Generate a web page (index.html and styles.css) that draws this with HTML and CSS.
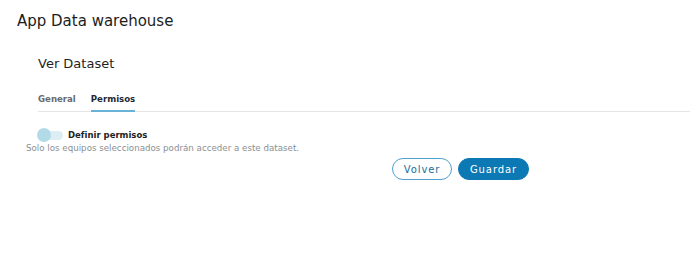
FILE: index.html
```html
<!DOCTYPE html>
<html lang="es">
<head>
<meta charset="utf-8">
<link rel="stylesheet" href="styles.css">
</head>
<body>
<header class="app-header">
  <h1 class="app-title">App Data warehouse</h1>
</header>
<main class="page">
  <h2 class="page-title">Ver Dataset</h2>
  <nav class="tabs">
    <span class="tab">General</span>
    <span class="tab tab-active">Permisos</span>
  </nav>
  <section class="perm">
    <div class="toggle-row">
      <span class="toggle"><span class="knob"></span></span>
      <span class="toggle-label">Definir permisos</span>
    </div>
    <p class="perm-desc">Solo los equipos seleccionados podrán acceder a este dataset.</p>
    <div class="actions">
      <button class="btn btn-outline">Volver</button>
      <button class="btn btn-primary">Guardar</button>
    </div>
  </section>
</main>
</body>
</html>
```

FILE: styles.css
```css
* { box-sizing: border-box; }
html, body { margin: 0; padding: 0; background: #fff; }
body {
  font-family: "DejaVu Sans", "Open Sans", sans-serif;
  color: #222;
  width: 690px;
  height: 271px;
  overflow: hidden;
}
.app-header { padding: 11px 0 0 17px; }
.app-title {
  margin: 0;
  font-size: 15px;
  font-weight: 400;
  line-height: 20px;
  color: #1d1d1d;
}
.page { padding: 25px 0 0 38px; }
.page-title {
  margin: 0;
  font-size: 13px;
  font-weight: 400;
  line-height: 16px;
  color: #1f1f1f;
}
.tabs {
  margin-top: 19px;
  display: flex;
  gap: 15px;
  border-bottom: 1px solid #e6e6e6;
}
.tab {
  font-size: 8.6px;
  line-height: 11px;
  padding: 3px 0 5px;
  color: #666b70;
  font-weight: 600;
  border-bottom: 2px solid transparent;
  margin-bottom: -1px;
}
.tab-active {
  color: #1e2a35;
  font-weight: 700;
  border-bottom-color: #6ab3d6;
}
.perm { padding-top: 18px; }
.toggle-row { display: flex; align-items: center; gap: 5px; }
.toggle {
  display: inline-flex;
  align-items: center;
  width: 25px;
  height: 9px;
  border-radius: 5px;
  background: #dcedf3;
  position: relative;
}
.knob {
  width: 14px;
  height: 14px;
  border-radius: 50%;
  background: #b3dbe7;
  margin-left: -1px;
}
.toggle-label {
  font-size: 8.5px;
  font-weight: 700;
  color: #222;
}
.perm-desc {
  margin: 3px 0 0 -12px;
  font-size: 8.7px;
  line-height: 11px;
  color: #8a8f93;
}
.actions {
  display: flex;
  gap: 6px;
  margin: 4px 0 0 354px;
}
.btn {
  font-family: "DejaVu Sans", sans-serif;
  font-size: 10px;
  font-weight: 400;
  letter-spacing: 0.9px;
  height: 22px;
  border-radius: 11px;
  padding: 0;
  cursor: pointer;
}
.btn-outline {
  width: 60px;
  background: #fff;
  color: #1b6f9e;
  border: 1.5px solid #4fa0cc;
}
.btn-primary {
  width: 71px;
  background: #0c78b4;
  color: #fff;
  border: 1px solid #0c78b4;
}
```
